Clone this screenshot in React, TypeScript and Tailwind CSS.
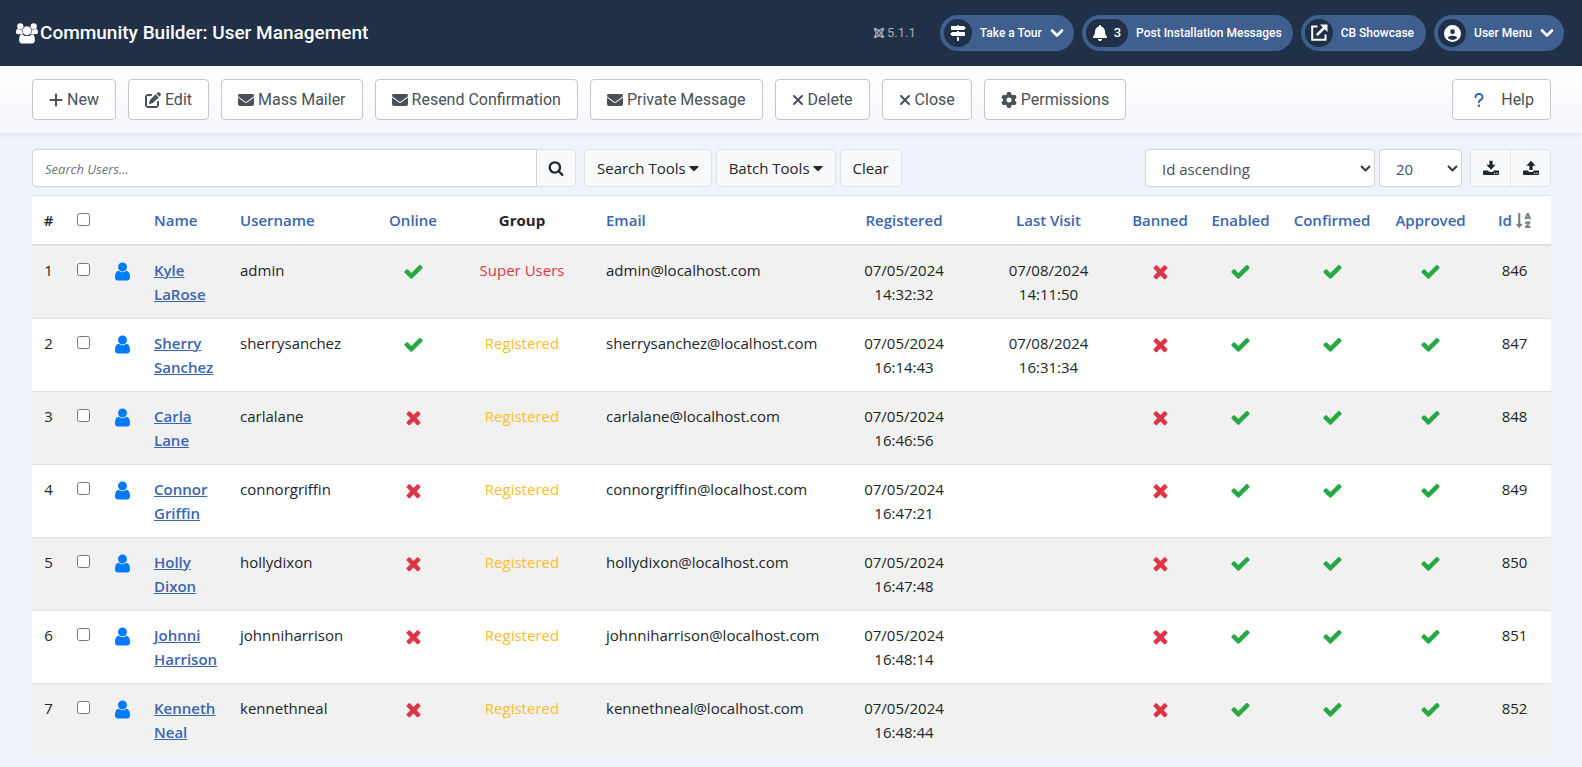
import React from 'react';
import {
  FaEnvelope,
  FaGear,
  FaJoomla,
  FaPenToSquare,
  FaPlus,
  FaQuestion,
  FaSignsPost,
  FaXmark,
  FaBell,
  FaCircleUser,
} from 'react-icons/fa6';
import { FaCaretDown, FaSortAlphaDown } from 'react-icons/fa';

type User = {
  id: number;
  name: string;
  username: string;
  online: boolean;
  group: string;
  registered: string;
  lastVisit: string;
};

const users: User[] = [
  { id: 846, name: 'Kyle LaRose', username: 'admin', online: true, group: 'Super Users', registered: '07/05/2024 14:32:32', lastVisit: '07/08/2024 14:11:50' },
  { id: 847, name: 'Sherry Sanchez', username: 'sherrysanchez', online: true, group: 'Registered', registered: '07/05/2024 16:14:43', lastVisit: '07/08/2024 16:31:34' },
  { id: 848, name: 'Carla Lane', username: 'carlalane', online: false, group: 'Registered', registered: '07/05/2024 16:46:56', lastVisit: '' },
  { id: 849, name: 'Connor Griffin', username: 'connorgriffin', online: false, group: 'Registered', registered: '07/05/2024 16:47:21', lastVisit: '' },
  { id: 850, name: 'Holly Dixon', username: 'hollydixon', online: false, group: 'Registered', registered: '07/05/2024 16:47:48', lastVisit: '' },
  { id: 851, name: 'Johnni Harrison', username: 'johnniharrison', online: false, group: 'Registered', registered: '07/05/2024 16:48:14', lastVisit: '' },
  { id: 852, name: 'Kenneth Neal', username: 'kennethneal', online: false, group: 'Registered', registered: '07/05/2024 16:48:44', lastVisit: '' },
];

const UsersIcon = () => (
  <svg viewBox="0 0 22 21" className="h-[21px] w-[22px]" fill="currentColor" aria-hidden="true">
    <circle cx="4.300" cy="3.400" r="3.100" />
    <circle cx="17.700" cy="3.400" r="3.100" />
    <path d="M1.600 5.800c1.600 1.400 3.800 1.400 5 .4-.5 1.800 0 3.600 1 5H2.200C.7 11.200 0 10.400 0 9.200c0-1.600.6-3 1.600-3.400zM20.400 5.800c-1.600 1.400-3.800 1.400-5 .4.500 1.800 0 3.600-1 5h5.400c1.500 0 2.200-.8 2.200-2 0-1.600-.6-3-1.600-3.400z" />
    <path d="M6 11.200c1.200 1.300 3 1.900 5 1.900s3.800-.6 5-1.900c1.900.4 2.900 2.600 2.900 5.800 0 2.200-1.100 3.500-3 3.500H6.100c-1.900 0-3-1.300-3-3.500 0-3.200 1-5.400 2.900-5.800z" />
    <circle cx="11" cy="7.800" r="4.700" stroke="#1f3047" strokeWidth=".5" />
  </svg>
);

const UserIcon = () => (
  <svg viewBox="0 0 1792 1792" className="mx-auto mt-[3px] h-[21px] w-[21px]" fill="currentColor" aria-hidden="true">
    <path d="M1536 1399q0 109-62.500 187t-150.500 78h-854q-88 0-150.500-78t-62.500-187q0-85 8.500-160.500t31.500-152 58.500-131 94-89 134.500-34.500q131 128 313 128t313-128q76 0 134.500 34.500t94 89 58.500 131 31.500 152 8.500 160.500zm-256-887q0 159-112.500 271.500t-271.500 112.500-271.500-112.500-112.500-271.500 112.500-271.500 271.500-112.500 271.500 112.500 112.500 271.500z" />
  </svg>
);

const ExternalIcon = () => (
  <svg viewBox="0 0 18 18" className="h-[18px] w-[18px]" fill="none" stroke="currentColor" strokeWidth="2" aria-hidden="true">
    <path d="M7.500 2.500H2.200v13.300h13.300V10.500" />
    <path d="M6.800 11.200 15 3" strokeWidth="2.600" />
    <path d="M10 .5h7.500V8z" fill="currentColor" stroke="none" />
  </svg>
);

const SearchIcon = () => (
  <svg viewBox="0 0 1792 1792" className="h-4 w-4" fill="currentColor" aria-hidden="true">
    <path d="M1216 832q0-185-131.500-316.500t-316.500-131.500-316.500 131.500-131.500 316.500 131.500 316.500 316.500 131.500 316.500-131.500 131.500-316.500zm512 832q0 52-38 90t-90 38q-54 0-90-38l-343-342q-179 124-399 124-143 0-273.500-55.500t-225-150-150-225-55.500-273.500 55.500-273.500 150-225 225-150 273.500-55.500 273.500 55.500 225 150 150 225 55.500 273.500q0 220-124 399l343 343q37 37 37 90z" />
  </svg>
);

const Chevron = ({ className }: { className: string }) => (
  <svg viewBox="0 0 14 14" className={className} fill="none" stroke="currentColor" strokeWidth="2.600" strokeLinecap="round" strokeLinejoin="round" aria-hidden="true">
    <path d="m2 4.500 5 5 5-5" />
  </svg>
);

const TrayIcon = ({ up = false }: { up?: boolean }) => (
  <svg viewBox="0 0 16 16" className="h-4 w-4" fill="currentColor" aria-hidden="true">
    {up ? (
      <path d="M8 .8 3.400 5.800h3V10h3.200V5.800h3z" />
    ) : (
      <path d="M8 9.800 3.400 4.800h3V.8h3.200v4h3z" />
    )}
    <path
      fillRule="evenodd"
      d="M1 10.500h4.200c.2 1 1.300 1.500 2.800 1.500s2.600-.5 2.800-1.500H15c.6 0 1 .4 1 1V14c0 .6-.4 1-1 1H1c-.6 0-1-.4-1-1v-2.500c0-.6.4-1 1-1zm10 2.300v1.200h1.200v-1.200zm2.400 0v1.200h1.200v-1.200z"
    />
  </svg>
);

const State = ({ on }: { on: boolean }) => (
  <svg
    viewBox="0 0 1792 1792"
    role="img"
    aria-label={on ? 'Yes' : 'No'}
    className={`mx-auto mt-[3px] h-[21px] w-[21px] ${on ? 'text-[#28a745]' : 'text-[#dc3545]'}`}
    fill="currentColor"
  >
    {on ? (
      <path d="M1671 566q0 40-28 68l-724 724-136 136q-28 28-68 28t-68-28l-136-136-362-362q-28-28-28-68t28-68l136-136q28-28 68-28t68 28l294 295 656-657q28-28 68-28t68 28l136 136q28 28 28 68z" />
    ) : (
      <path d="M1490 1322q0 40-28 68l-136 136q-28 28-68 28t-68-28l-294-294-294 294q-28 28-68 28t-68-28l-136-136q-28-28-28-68t28-68l294-294-294-294q-28-28-28-68t28-68l136-136q28-28 68-28t68 28l294 294 294-294q28-28 68-28t68 28l136 136q28 28 28 68t-28 68l-294 294 294 294q28 28 28 68z" />
    )}
  </svg>
);

const pill = 'flex h-9 items-center rounded-full bg-[#3f608f] pl-1 text-xs font-medium text-white';
const badge = 'flex h-7 min-w-7 items-center justify-center rounded-full bg-[#1f3047]';
const toolButton = 'flex h-[41px] items-center gap-1 rounded border border-[#c3c6cb] bg-white px-4 text-base text-[#495057]';
const lightButton = 'flex h-[38px] items-center justify-center border border-[#dfe3e7] bg-[#f8f9fa] text-[#212529]';
const selectBox = 'h-[38px] w-full appearance-none rounded border border-[#ced4da] bg-white pl-4 pr-6 pt-[2px] text-[#495057]';

const toolbar = [
  { label: 'New', icon: <FaPlus className="h-4 w-[14px]" /> },
  { label: 'Edit', icon: <FaPenToSquare className="h-4 w-4" /> },
  { label: 'Mass Mailer', icon: <FaEnvelope className="h-4 w-4" /> },
  { label: 'Resend Confirmation', icon: <FaEnvelope className="h-4 w-4" /> },
  { label: 'Private Message', icon: <FaEnvelope className="h-4 w-4" /> },
  { label: 'Delete', icon: <FaXmark className="h-4 w-3" /> },
  { label: 'Close', icon: <FaXmark className="h-4 w-3" /> },
  { label: 'Permissions', icon: <FaGear className="h-4 w-4" /> },
];

const columns = [
  { label: 'Name', width: 'w-[86px]', center: false },
  { label: 'Username', width: 'w-[148px]', center: false },
  { label: 'Online', width: 'w-[74px]', center: true },
  { label: 'Group', width: 'w-[144px]', center: true },
  { label: 'Email', width: 'w-auto', center: false },
  { label: 'Registered', width: 'w-[146px]', center: true },
  { label: 'Last Visit', width: 'w-[143px]', center: true },
  { label: 'Banned', width: 'w-20', center: true },
  { label: 'Enabled', width: 'w-[81px]', center: true },
  { label: 'Confirmed', width: 'w-[102px]', center: true },
  { label: 'Approved', width: 'w-[95px]', center: true },
];

const Header = () => (
  <header className="flex h-[66px] items-center justify-between bg-[#1f3047] pl-4 pr-[18px] font-[Roboto,sans-serif] text-white">
    <h1 className="flex items-center gap-[2px] text-[19px] font-medium">
      <UsersIcon />
      Community Builder: User Management
    </h1>
    <div className="flex items-center gap-2">
      <span className="mr-4 flex items-center gap-[2px] text-[13px] text-[#a5acb5]">
        <FaJoomla className="h-3 w-3" />
        5.1.1
      </span>
      <button type="button" className={`${pill} pr-[10px]`}>
        <span className={badge}><FaSignsPost className="h-4 w-4" /></span>
        <span className="ml-2">Take a Tour</span>
        <Chevron className="ml-2 h-[14px] w-[14px]" />
      </button>
      <button type="button" className={`${pill} pr-[11px]`}>
        <span className={`${badge} gap-[6px] px-[6px]`}>
          <FaBell className="h-4 w-4" />
          <span className="pr-px text-[13px]">3</span>
        </span>
        <span className="ml-2">Post Installation Messages</span>
      </button>
      <a href="#showcase" className={`${pill} pr-3`}>
        <span className={badge}><ExternalIcon /></span>
        <span className="ml-2">CB Showcase</span>
      </a>
      <button type="button" className={`${pill} pr-[10px]`}>
        <span className={badge}><FaCircleUser className="h-[17px] w-[17px]" /></span>
        <span className="ml-2">User Menu</span>
        <Chevron className="ml-2 h-[14px] w-[14px]" />
      </button>
    </div>
  </header>
);

const Toolbar = () => (
  <div className="flex items-center gap-3 bg-linear-to-b from-white to-[#f5f7fc] px-8 py-[13px] pr-[31px] font-[Roboto,sans-serif] shadow-[0_1px_5px_rgba(31,48,71,0.12)]">
    {toolbar.map((item) => (
      <button key={item.label} type="button" className={toolButton}>
        {item.icon}
        {item.label}
      </button>
    ))}
    <button type="button" className={`${toolButton} ml-auto`}>
      <FaQuestion className="mr-2 h-4 w-5 text-[#2a69b8]" />
      Help
    </button>
  </div>
);

const Filters = () => (
  <div className="flex items-center gap-1">
    <div className="mr-1 flex w-[544px]">
      <input
        type="search"
        aria-label="Search Users"
        placeholder="Search Users..."
        className="h-[38px] min-w-0 flex-1 rounded-l border border-[#ced4da] bg-white px-3 pt-[2px] text-[13px] placeholder:italic placeholder:text-[#6c757d]"
      />
      <button type="button" aria-label="Search" className={`${lightButton} w-[39px] rounded-r border-l-0`}>
        <SearchIcon />
      </button>
    </div>
    <button type="button" className={`${lightButton} gap-[3px] rounded px-3`}>
      Search Tools <FaCaretDown className="h-4 w-[10px]" />
    </button>
    <button type="button" className={`${lightButton} gap-[3px] rounded px-3`}>
      Batch Tools <FaCaretDown className="h-4 w-[10px]" />
    </button>
    <button type="button" className={`${lightButton} rounded px-3`}>Clear</button>
    <div className="relative ml-auto w-[230px]">
      <select aria-label="Sort order" className={selectBox}>
        <option>Id ascending</option>
      </select>
      <Chevron className="pointer-events-none absolute right-1 top-[14px] h-[11px] w-[11px] text-[#343a40]" />
    </div>
    <div className="relative w-[83px]">
      <select aria-label="Rows per page" className={selectBox}>
        <option>20</option>
      </select>
      <Chevron className="pointer-events-none absolute right-1 top-[14px] h-[11px] w-[11px] text-[#343a40]" />
    </div>
    <div className="ml-1 flex">
      <button type="button" aria-label="Import" className={`${lightButton} w-[41px] rounded-l`}>
        <TrayIcon />
      </button>
      <button type="button" aria-label="Export" className={`${lightButton} w-10 rounded-r border-l-0`}>
        <TrayIcon up />
      </button>
    </div>
  </div>
);

const UserTable = () => (
  <table className="w-full table-fixed border-collapse bg-white leading-6">
    <thead>
      <tr className="border-b-2 border-t border-b-[#dee2e6] border-t-[#dee2e6]">
        <th scope="col" className="w-[33px] py-3 text-center font-semibold">#</th>
        <th scope="col" className="w-[37px] pb-[14px] pt-3">
          <input type="checkbox" aria-label="Select all users" className="mx-auto block h-[13px] w-[13px]" />
        </th>
        <td className="w-10" />
        {columns.map((column) => (
          <th
            key={column.label}
            scope="col"
            className={`${column.width} ${column.center ? 'text-center' : 'pl-3 text-left'} py-3 font-semibold`}
          >
            {column.label === 'Group' ? (
              <span className="font-bold">Group</span>
            ) : (
              <a href="#sort" className="text-[#3a66b0]">{column.label}</a>
            )}
          </th>
        ))}
        <th scope="col" className="w-[73px] py-3 font-semibold">
          <a href="#sort" className="flex items-center justify-center gap-1 text-[#3a66b0]">
            Id <FaSortAlphaDown className="h-[17px] w-[15px] text-[#7b7f83]" />
          </a>
        </th>
      </tr>
    </thead>
    <tbody>
      {users.map((user, i) => (
        <tr key={user.id} className="border-t border-[#dee2e6] align-top odd:bg-[#f1f1f1]">
          <td className="py-3 text-center">{i + 1}</td>
          <td className="py-3">
            <input type="checkbox" aria-label={`Select ${user.name}`} className="mx-auto mt-[5px] block h-[13px] w-[13px]" />
          </td>
          <td className="py-3 text-[#007bff]"><UserIcon /></td>
          <td className="px-3 py-3">
            <a href="#user" className="font-semibold text-[#3a66b0] underline">{user.name}</a>
          </td>
          <td className="py-3 pl-3">{user.username}</td>
          <td className="py-3"><State on={user.online} /></td>
          <td className={`py-3 text-center ${user.group === 'Registered' ? 'text-[#fbbd2c]' : 'text-[#dc3545]'}`}>
            {user.group}
          </td>
          <td className="py-3 pl-3">{user.username}@localhost.com</td>
          <td className="px-7 py-3 text-center">{user.registered}</td>
          <td className="px-7 py-3 text-center">{user.lastVisit}</td>
          <td className="py-3"><State on={false} /></td>
          <td className="py-3"><State on /></td>
          <td className="py-3"><State on /></td>
          <td className="py-3"><State on /></td>
          <td className="py-3 text-center">{user.id}</td>
        </tr>
      ))}
    </tbody>
  </table>
);

export default function App() {
  return (
    <div className="min-h-screen bg-[#eff3fb] font-['Open_Sans',sans-serif] text-[15px] text-[#212529]">
      <Header />
      <Toolbar />
      <main className="flex flex-col gap-2 px-8 pb-3 pt-4 pr-[31px]">
        <Filters />
        <UserTable />
      </main>
    </div>
  );
}
